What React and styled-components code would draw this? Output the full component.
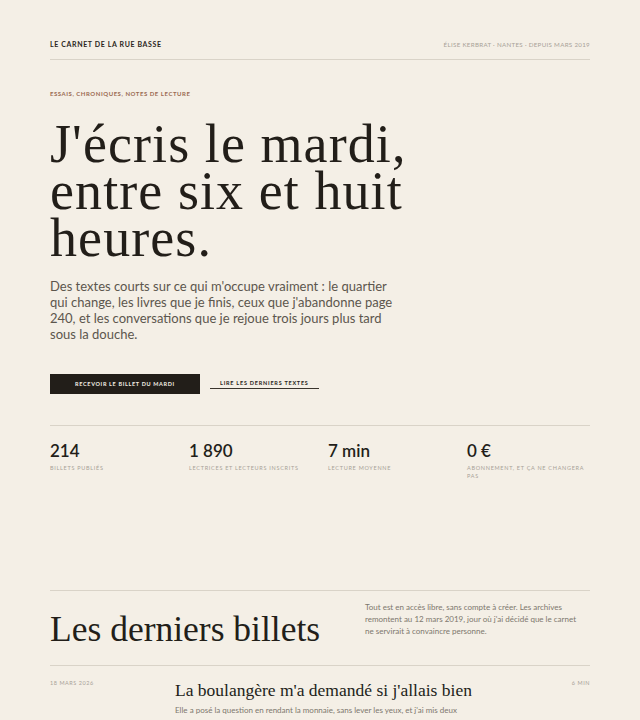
import React from 'react'
import styled, { createGlobalStyle } from 'styled-components'

const GlobalStyle = createGlobalStyle`
  html, body {
    margin: 0;
    padding: 0;
    background: #f4efe6;
  }
  * { box-sizing: border-box; }
`

const sans = `Lato, "Liberation Sans", sans-serif`
const serif = `"Liberation Serif", "DejaVu Serif", serif`

const Page = styled.div`
  padding: 0 50px;
  min-height: 720px;
  background: #f4efe6;
  color: #231f1a;
  font-family: ${sans};
`

const TopBar = styled.header`
  display: flex;
  justify-content: space-between;
  align-items: center;
  padding-top: 40px;
  padding-bottom: 11px;
  border-bottom: 1px solid #d9d3c8;
`

const Brand = styled.div`
  font-size: 7px;
  font-weight: 700;
  letter-spacing: 0.09em;
  color: #2a2520;
`

const Byline = styled.div`
  font-size: 6.2px;
  letter-spacing: 0.05em;
  color: #a8a298;
`

const Hero = styled.section`
  padding-top: 30px;
  padding-bottom: 31px;
  border-bottom: 1px solid #d9d3c8;
`

const Eyebrow = styled.div`
  font-size: 6px;
  font-weight: 700;
  letter-spacing: 0.09em;
  color: #9b6b52;
`

const Title = styled.h1`
  margin: 24px 0 0;
  font-family: ${serif};
  font-weight: 400;
  font-size: 54px;
  line-height: 47px;
  letter-spacing: 0.02em;
  color: #221e19;
  max-width: 420px;
`

const Lede = styled.p`
  margin: 16px 0 0;
  max-width: 350px;
  font-size: 13px;
  line-height: 16px;
  color: #5c564d;
`

const Actions = styled.div`
  display: flex;
  align-items: center;
  gap: 10px;
  margin-top: 32px;
`

const PrimaryButton = styled.button`
  width: 150px;
  height: 20px;
  border: none;
  background: #221e19;
  color: #f4efe6;
  font-family: ${sans};
  font-size: 5.5px;
  font-weight: 700;
  letter-spacing: 0.12em;
`

const TextLink = styled.a`
  display: inline-block;
  padding: 0 10px 2px;
  border-bottom: 1px solid #3a342d;
  font-size: 5.5px;
  font-weight: 700;
  letter-spacing: 0.14em;
  color: #2a2520;
`

const Stats = styled.div`
  display: grid;
  grid-template-columns: repeat(4, 1fr);
  gap: 16px;
  padding-top: 14px;
`

const Stat = styled.div`
  display: flex;
  flex-direction: column;
  gap: 3px;
`

const StatValue = styled.div`
  font-size: 17px;
  font-weight: 600;
  color: #221e19;
`

const StatLabel = styled.div`
  font-size: 5.5px;
  line-height: 8px;
  letter-spacing: 0.13em;
  color: #a8a298;
  max-width: 120px;
`

const Latest = styled.section`
  margin-top: 110px;
  padding: 10px 0 18px;
  border-top: 1px solid #d9d3c8;
  border-bottom: 1px solid #d9d3c8;
  display: grid;
  grid-template-columns: 315px 1fr;
  align-items: start;
`

const SectionTitle = styled.h2`
  margin: 10px 0 0;
  font-family: ${serif};
  font-weight: 400;
  font-size: 35.5px;
  line-height: 36px;
  color: #221e19;
`

const SectionNote = styled.p`
  margin: 0;
  font-size: 8px;
  line-height: 12px;
  color: #7d776d;
  max-width: 218px;
`

const Post = styled.article`
  display: grid;
  grid-template-columns: 125px 1fr auto;
  padding-top: 12px;
`

const PostMeta = styled.div`
  font-size: 5.5px;
  letter-spacing: 0.1em;
  color: #a8a298;
  padding-top: 2px;
`

const PostBody = styled.div`
  display: flex;
  flex-direction: column;
  gap: 4px;
  padding-top: 2px;
`

const PostTitle = styled.h3`
  margin: 0;
  font-family: ${serif};
  font-weight: 400;
  font-size: 17.5px;
  line-height: 20px;
  color: #221e19;
`

const PostExcerpt = styled.p`
  margin: 0;
  font-size: 8px;
  line-height: 12px;
  color: #7d776d;
`

const stats = [
  { value: '214', label: 'BILLETS PUBLIÉS' },
  { value: '1 890', label: 'LECTRICES ET LECTEURS INSCRITS' },
  { value: '7 min', label: 'LECTURE MOYENNE' },
  { value: '0 €', label: 'ABONNEMENT, ET ÇA NE CHANGERA PAS' },
]

export default function App() {
  return (
    <Page>
      <GlobalStyle />
      <TopBar>
        <Brand>LE CARNET DE LA RUE BASSE</Brand>
        <Byline>ÉLISE KERBRAT · NANTES · DEPUIS MARS 2019</Byline>
      </TopBar>

      <Hero>
        <Eyebrow>ESSAIS, CHRONIQUES, NOTES DE LECTURE</Eyebrow>
        <Title>J'écris le mardi, entre six et huit heures.</Title>
        <Lede>
          Des textes courts sur ce qui m'occupe vraiment : le quartier qui change, les livres que je
          finis, ceux que j'abandonne page 240, et les conversations que je rejoue trois jours plus
          tard sous la douche.
        </Lede>
        <Actions>
          <PrimaryButton>RECEVOIR LE BILLET DU MARDI</PrimaryButton>
          <TextLink>LIRE LES DERNIERS TEXTES</TextLink>
        </Actions>
      </Hero>

      <Stats>
        {stats.map((s) => (
          <Stat key={s.value}>
            <StatValue>{s.value}</StatValue>
            <StatLabel>{s.label}</StatLabel>
          </Stat>
        ))}
      </Stats>

      <Latest>
        <SectionTitle>Les derniers billets</SectionTitle>
        <SectionNote>
          Tout est en accès libre, sans compte à créer. Les archives remontent au 12 mars 2019, jour
          où j'ai décidé que le carnet ne servirait à convaincre personne.
        </SectionNote>
      </Latest>

      <Post>
        <PostMeta>18 MARS 2026</PostMeta>
        <PostBody>
          <PostTitle>La boulangère m'a demandé si j'allais bien</PostTitle>
          <PostExcerpt>
            Elle a posé la question en rendant la monnaie, sans lever les yeux, et j'ai mis deux
          </PostExcerpt>
        </PostBody>
        <PostMeta>6 MIN</PostMeta>
      </Post>
    </Page>
  )
}
